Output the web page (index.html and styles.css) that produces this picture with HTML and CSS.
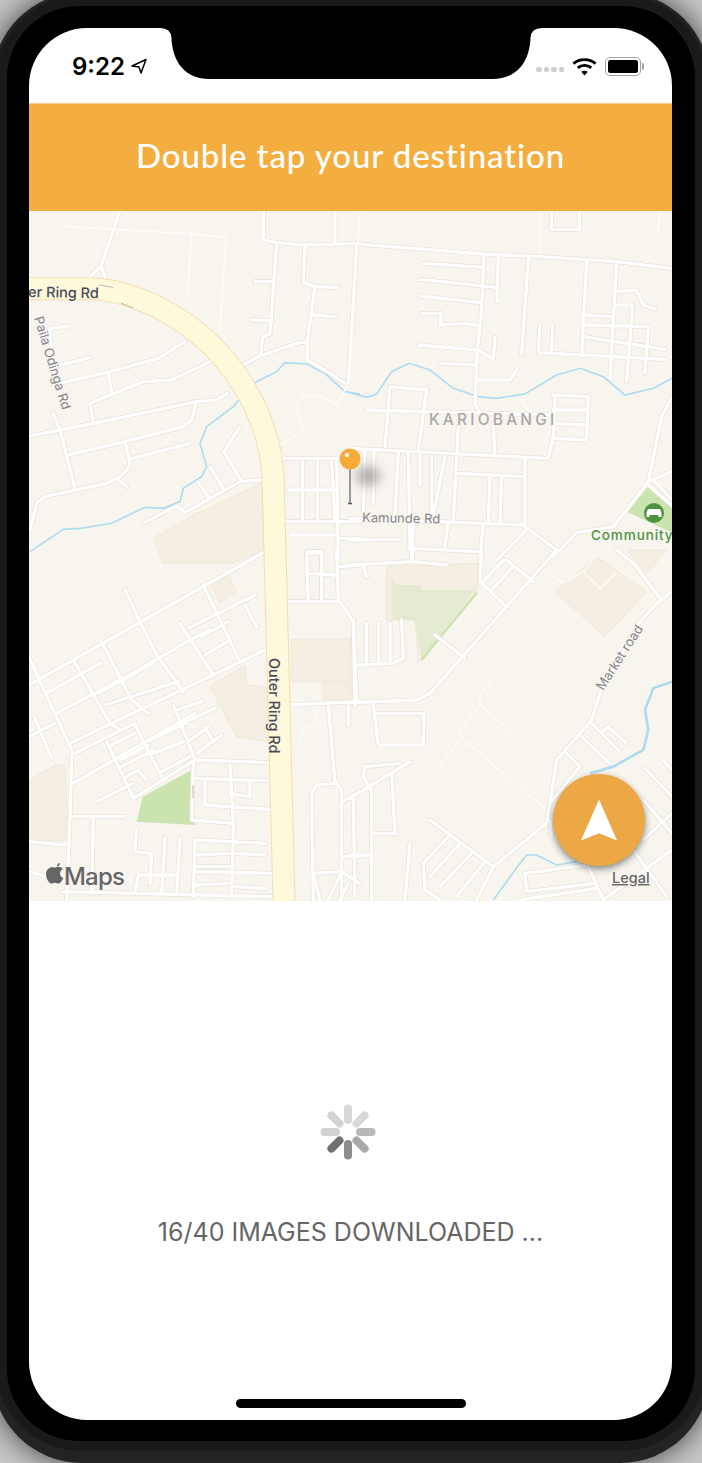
FILE: index.html
```html
<!DOCTYPE html>
<html lang="en">
<head>
    <meta charset="UTF-8">
    <meta name="viewport" content="width=device-width, initial-scale=1.0">
    <title>Double tap your destination</title>
    <link rel="stylesheet" href="styles.css">
</head>
<body>
    <div class="device">
        <div class="rim">
            <div class="bezel">
                <div class="screen">
                    <div class="status-bar">
                        <div class="status-left">
                            <span class="time">9:22</span>
                            <svg class="location-icon" viewBox="0 0 18 16"><path d="M16 1.5 2 8l7 1 2 6z"/></svg>
                        </div>
                        <div class="status-right">
                            <div class="signal"><i></i><i></i><i></i><i></i></div>
                            <svg class="wifi-icon" viewBox="0 0 26 19">
                                <path d="M1.5 6.5C7.8.9 18.2.9 24.5 6.5"/>
                                <path d="M6 11c4-3.5 10-3.5 14 0"/>
                                <path class="wifi-dot" d="M13 18.8 9.6 15c2-1.5 4.800-1.500 6.800 0z"/>
                            </svg>
                            <div class="battery"><div class="battery-level"></div></div>
                            <div class="battery-nub"></div>
                        </div>
                    </div>

                    <header class="title-bar">
                        <h1>Double tap your destination</h1>
                    </header>

                    <div class="map">
                        <svg class="map-svg" viewBox="29 211 643 690">
                            <defs>
                                <g id="roads">
                                    <!-- top left -->
                                    <g transform="translate(20 210) scale(.3333)">
                                        <path d="M300 0 270 90 243 168 205 205M243 168 258 210 285 225"/>
                                        <path d="M730 0V90L770 98 855 105 1020 100M945 0V98M770 98 750 372 728 380 722 435"/>
                                        <path d="M705 215H760M695 330 755 332M855 105 850 218 885 230 955 232M885 230 862 395V450L930 490 975 520"/>
                                        <path d="M1010 110 985 520M875 315 948 320M660 470 720 438 830 400 862 395"/>
                                        <path d="M88 355 145 348M88 355 105 520M105 470 212 442M100 525 270 485 415 445 495 395M265 490 275 548"/>
                                        <path d="M210 580 370 515 455 510 570 455M210 580 220 640M30 678 220 640 530 575 590 570 622 550"/>
                                        <path d="M530 575 515 630 490 650 315 695 145 735M120 660 165 835M100 610 120 660"/>
                                        <path d="M315 695 330 760 325 775 295 805 260 820 75 860 50 880 30 960M295 810 320 830M335 745 510 700"/>
                                        <path d="M660 650 612 725 665 815M570 770 612 840M535 818 568 865M372 938 470 888 495 908 660 815 725 810"/>
                                        <path d="M775 710 790 745H960M848 755V930M893 755V930M935 755 945 930M790 935H1020M805 840H945"/>
                                        <path d="M810 975H950M950 745 955 1050M960 985H1020M860 1050V1025H905V1050"/>
                                    </g>
                                    <!-- top right -->
                                    <g transform="translate(350 210) scale(.3333)">
                                        <path d="M0 100 400 132 570 140 800 155 966 175M605 0V58H688V0"/>
                                        <path d="M220 160 400 172M210 208 440 232 442 275M445 140 442 232M210 258 390 278M215 310H272V345L345 340 390 348"/>
                                        <path d="M402 135 395 300 382 420 375 580 390 610M205 405 385 420 430 448 435 382M272 460 380 465M385 510H480L500 480M535 145 515 432"/>
                                        <path d="M570 345 565 428 695 435 945 448M608 348 605 428M710 155 695 435M800 160 780 505M695 315 790 320"/>
                                        <path d="M800 245 860 240 880 285 915 297M800 285H848L830 515M700 345 895 350 885 490M700 380 945 418"/>
                                        <path d="M120 530 230 540 205 720M120 530 105 710M50 600 610 615"/>
                                        <path d="M610 555 715 560 710 690 608 685 595 745M615 565 610 680M610 600H710M610 640 710 645"/>
                                        <path d="M0 715 590 745M325 650 320 740M430 640 435 740M525 750V950M320 790 520 800M320 740 310 930"/>
                                        <path d="M145 725 135 915M175 730 180 1020M210 735V825M245 740V915M285 740 265 840 250 915M72 720 70 880M45 720 40 920"/>
                                        <path d="M420 800 415 935M455 800 450 935M0 925 520 945 620 1020M0 990 148 988M400 940 390 1040M295 935 285 1010"/>
                                        <path d="M190 1015 385 1025M190 940 185 1050M535 955 440 1050"/>
                                        <path d="M966 560 935 620 895 815 830 900 790 950 680 968 610 1040M895 815 966 785M895 825 970 890M910 810 966 870"/>
                                    </g>
                                    <!-- bottom left -->
                                    <g transform="translate(20 550) scale(.3333)">
                                        <path d="M27 405 735 5M315 118 355 205 410 315 490 425M245 275 335 450 385 490M160 330 270 520 300 540M27 320 60 395 160 610"/>
                                        <path d="M80 430 240 340M110 490 310 385 510 270 570 240M505 235 705 135M480 220 580 375M550 105 660 335M675 165 710 232"/>
                                        <path d="M150 580 735 300M545 260 625 215M555 315 630 270M235 430 400 340M255 465 475 395M165 610 345 520M160 700 525 490"/>
                                        <path d="M460 465 525 630M345 525 425 680M260 575 310 680 340 745 525 630M470 480 545 455M490 520 585 475M505 575 565 530"/>
                                        <path d="M530 610 605 555M555 530 575 565M275 585 345 550M300 630 385 585M390 570 500 520M400 610 490 575M425 665 510 620"/>
                                        <path d="M305 650 400 600M320 680 355 660 378 690M230 755 340 700M45 505 95 625M27 560 105 520"/>
                                        <path d="M155 615 150 800 140 1050M150 800H310M220 800 215 1030M27 875 135 885M30 965 130 995M130 1025 760 1040"/>
                                        <path d="M525 630 750 638M520 640 515 810 640 820M525 685 750 692M555 690V765L750 778M630 645 640 820 635 1040M690 695V740L630 730"/>
                                        <path d="M350 835 345 905 395 910 390 1000M435 865 425 1030M480 865 470 1030M345 1030 355 975H470"/>
                                        <path d="M525 870 735 880M640 910 735 915M525 915 630 910M525 950H630M525 870 520 1040M525 965 755 970M525 1005 630 1000M640 1010 735 1015"/>
                                        <path d="M800 155H960L1000 215 1005 465M810 465 1020 455M925 465 945 695 965 720V1050M945 700 890 705 875 730 880 1050"/>
                                        <path d="M965 755 1020 725M880 970 965 965 1020 1000M1000 750 1005 1040M970 920H1020M880 970 900 1050M965 965 925 1050M985 1000 960 1050"/>
                                        <path d="M860 10 865 150M905 10V150M950 0 955 150M860 70 950 75M865 10H895M960 50 1020 45M985 465V525"/>
                                    </g>
                                    <!-- bottom right -->
                                    <g transform="translate(350 550) scale(.3333)">
                                        <path d="M0 45 185 35 190 0M190 35 290 45M40 50 50 80M395 0 390 95 470 170M460 30 400 95M470 30 550 95M490 50 425 120"/>
                                        <path d="M620 0 240 430 200 450 0 458M800 0 850 40 935 150 966 125M930 150 870 215 750 430 725 510 620 630 600 760 590 820 430 950 240 810"/>
                                        <path d="M255 255 345 325M50 220V340M85 220V335M120 220V335M155 210 160 325 130 340 20 345M10 210 20 450"/>
                                        <path d="M70 465 85 585H220L222 490H75M180 635 0 745M45 650 40 680 65 725V1050M45 650 150 640M125 670 135 850M65 850H135M0 915H65"/>
                                        <path d="M180 880 165 1050M430 950 380 1050M300 855 220 940 225 1020 270 1050M330 880 240 980M370 905 270 1010M405 935 320 1040"/>
                                        <path d="M725 520 810 605M695 560 778 640M828 578 775 530 755 545M650 610 690 650 600 760M600 810 605 860"/>
                                        <path d="M885 655 966 740M940 630 966 660M880 750 966 850M966 790 880 870M850 900 950 1040M966 900 760 1050"/>
                                        <path d="M710 945 525 970 530 1025 730 1000M510 1050 740 1015M715 950 760 1050"/>
                                    </g>
                                </g>
                            </defs>

                            <rect class="land" x="29" y="211" width="643" height="690"/>

                            <g class="area">
                                <path transform="translate(20 210) scale(.3333)" d="M400 985 510 920 725 820 730 1020 640 1060H430Z"/>
                                <g transform="translate(20 550) scale(.3333)">
                                    <path d="M575 100 625 75 650 125 600 160Z"/>
                                    <path d="M570 410 650 560 745 575 740 410 680 405 675 345Z"/>
                                    <path d="M27 690 110 645 135 650 145 870 27 875Z"/>
                                    <path d="M815 268H1005V395H815ZM910 400H1005V450H910Z"/>
                                </g>
                                <g transform="translate(350 550) scale(.3333)">
                                    <path d="M110 50 385 40 380 125 215 330 205 335 195 210H110Z"/>
                                    <path d="M615 125 740 20 890 125 765 260Z"/>
                                    <path d="M830 0H950L890 70Z"/>
                                    <path d="M0 260H10V450H0Z"/>
                                </g>
                            </g>
                            <g class="park">
                                <path transform="translate(20 550) scale(.3333)" d="M368 740 515 660 525 825 350 815Z"/>
                                <path transform="translate(350 210) scale(.3333)" d="M900 825 970 900V970L830 905Z"/>
                                <path class="park-soft" transform="translate(350 550) scale(.3333)" d="M125 90 140 105H210L215 120H375L215 330 195 210H125Z"/>
                                <path class="park-edge" transform="translate(350 550) scale(.3333)" d="M380 128 215 330"/>
                            </g>

                            <g class="river">
                                <path transform="translate(20 210) scale(.3333)" d="M30 1025 130 958 180 955 275 940 375 892 430 895 480 875 490 835 545 800 560 770 540 700 560 650 640 590 700 520 770 485 795 458 860 462 915 490 975 545 1020 552"/>
                                <path transform="translate(350 210) scale(.3333)" d="M0 548 50 562 80 552 125 485 178 460 240 480 310 535 385 560 440 565 525 552 620 495 690 475 760 500 825 555 910 535 966 505"/>
                                <path transform="translate(350 550) scale(.3333)" d="M430 1050 510 940 530 915H560L620 945 680 935"/>
                                <path class="river-wide" transform="translate(350 550) scale(.3333)" d="M720 670 790 650 880 600 895 540 885 480 910 415 966 395"/>
                            </g>

                            <use class="road-casing" href="#roads"/>
                            <use class="road-fill" href="#roads"/>

                            <g class="path-thin">
                                <g transform="translate(20 210) scale(.3333)">
                                    <path d="M120 48 515 72 618 82 600 360 618 390M515 72 502 258"/>
                                    <path d="M1010 110 985 520 950 585 905 560 850 555 825 590 850 660 775 710"/>
                                </g>
                                <g transform="translate(350 210) scale(.3333)">
                                    <path d="M30 0 22 105 0 520M570 0V140M930 0 925 62M515 565 525 590 545 605"/>
                                </g>
                                <g transform="translate(350 550) scale(.3333)">
                                    <path d="M590 60 640 100 700 65 745 10M700 65 750 115 800 70"/>
                                    <path d="M435 380 390 435V465L330 540 335 565 590 780M390 465 500 560M335 565 255 665"/>
                                </g>
                                <g transform="translate(20 550) scale(.3333)">
                                    <path d="M895 470 885 520 850 540 840 570M835 455 860 425"/>
                                </g>
                            </g>

                            <path class="ring-casing" d="M29 288.700H90C135 290 190 318 225 360 250 390 270 430 273 475L284 901"/>
                            <path class="ring-fill" d="M29 288.700H90C135 290 190 318 225 360 250 390 270 430 273 475L284 901"/>
                            <path class="one-way" d="M99 285 113 287.500M121 303 133 308M193 785V798"/>

                            <text class="label label-ring" transform="translate(28 297) rotate(1)">er Ring Rd</text>
                            <text class="label label-ring" transform="translate(269 658) rotate(90)">Outer Ring Rd</text>
                            <text class="label label-minor" transform="translate(34 318) rotate(73)">Paila Odinga Rd</text>
                            <text class="label label-minor" transform="translate(362 522) rotate(1)">Kamunde Rd</text>
                            <text class="label label-minor" transform="translate(603 691) rotate(-57)">Market road</text>
                            <text class="label label-place" x="429" y="425">KARIOBANGI</text>
                            <text class="label label-poi" x="591" y="540">Community</text>

                            <circle class="poi-dot" cx="654" cy="513" r="10"/>
                            <path class="poi-glyph" d="M648 509h12l1.500 4v4h-3v-2h-9v2h-3v-4z"/>

                            <path class="apple-logo" d="M57 866.500c1.300-.1 2.700-1 3-3.500-1.800.2-3.200 1.500-3 3.500zm-5.200 1c-3 0-5.800 2.500-5.800 6.500 0 4.500 3 9.500 5.500 9.500 1.200 0 2-.8 3.500-.8s2.200.8 3.500.8c1.800 0 3.800-2.800 4.700-5.500-2-.8-3.200-2.500-3.200-4.500s1.100-3.500 2.800-4.500c-1.200-1.500-2.800-2.300-4.500-2.300-1.500 0-2.500.8-3.600.8-1.200 0-2-.8-3.400-.8z"/>
                            <text class="label label-maps" x="64" y="885">Maps</text>
                            <text class="label label-legal" x="612" y="883">Legal</text>

                            <!-- pin -->
                            <ellipse class="pin-shadow" cx="368" cy="476" rx="12" ry="10"/>
                            <path class="pin-stem" d="M350 468V503"/>
                            <path class="pin-foot" d="M348 503.500H352"/>
                            <circle class="pin-head" cx="350" cy="459" r="10.500"/>
                            <circle class="pin-shine" cx="347" cy="455" r="2.200"/>
                        </svg>

                        <button class="locate-btn" type="button" aria-label="Locate">
                            <svg viewBox="0 0 40 44"><path d="M20 0 39 43 20 35.500 1 43z"/></svg>
                        </button>
                    </div>

                    <div class="loading">
                        <svg class="spinner" viewBox="-28 -28 56 56">
                            <path class="spoke s1" d="M0-23.500V-12"/>
                            <path class="spoke s2" d="M16.600-16.600 8.500-8.500"/>
                            <path class="spoke s3" d="M23.500 0H12"/>
                            <path class="spoke s4" d="M16.600 16.600 8.500 8.500"/>
                            <path class="spoke s5" d="M0 23.500V12"/>
                            <path class="spoke s6" d="M-16.600 16.600-8.500 8.500"/>
                            <path class="spoke s7" d="M-23.500 0H-12"/>
                            <path class="spoke s8" d="M-16.600-16.600-8.500-8.500"/>
                        </svg>
                        <p class="loading-text">16/40 IMAGES DOWNLOADED ...</p>
                    </div>

                    <div class="home-indicator"></div>
                </div>
                <svg class="notch" viewBox="160 28 382 52"><path d="M160 28Q171 28 171.500 38C172 55 180 79 210 79H492C522 79 530 55 530.500 38Q531 28 542 28Z"/></svg>
            </div>
        </div>
    </div>
</body>
</html>
```
FILE: styles.css
```css
* {
    box-sizing: border-box;
}
html, body {
    margin: 0;
    padding: 0;
    height: 100%;
    overflow: hidden;
}
body {
    background-color: #c8c8c8;
    font-family: Inter, Roboto, sans-serif;
}

/* phone frame, a bit wider than the window so its sides get cut off */
.device {
    width: 718px;
    height: 1471px;
    margin: -8px -8px 0;
    padding: 3px 3px 12px;
    background-color: #232323;
    border-radius: 90px;
    box-shadow: 0 0 30px #3c3c3c;
}
.rim {
    height: 1456px;
    padding: 11px 12px 10px;
    background-color: #1a1a1a;
    border-radius: 87px;
}
.bezel {
    position: relative;
    height: 1435px;
    padding: 22px 23px 21px 22px;
    background-color: #000;
    border-radius: 72px;
}
.screen {
    position: relative;
    display: flex;
    flex-direction: column;
    height: 1392px;
    background-color: #fff;
    border-radius: 58px;
    overflow: hidden;
}
.notch {
    position: absolute;
    top: 22px;
    left: 153px;
    width: 382px;
    height: 52px;
    fill: #000;
}

/* status bar */
.status-bar {
    display: flex;
    justify-content: space-between;
    flex: 0 0 75px;
    padding: 22px 28px 0 43px;
}
.status-left, .status-right {
    display: flex;
    align-items: center;
    height: 32px;
}
.time {
    font-size: 24px;
    font-weight: 600;
    color: #000;
}
.location-icon {
    width: 18px;
    height: 16px;
    margin-left: 5px;
    fill: none;
    stroke: #000;
    stroke-width: 1.500;
    stroke-linejoin: round;
}
.signal {
    display: flex;
    gap: 2px;
    margin-right: 8px;
    margin-top: 7px;
}
.signal i {
    width: 5.500px;
    height: 5.500px;
    background-color: #cfcfcf;
    border-radius: 2px;
}
.wifi-icon {
    width: 25px;
    height: 19px;
    margin-right: 8px;
    fill: none;
    stroke: #000;
    stroke-width: 3;
}
.wifi-dot {
    fill: #000;
    stroke: none;
}
.battery {
    width: 36px;
    height: 19px;
    padding: 2px;
    border: 1.500px solid #a0a0a0;
    border-radius: 5px;
}
.battery-level {
    height: 100%;
    background-color: #000;
    border-radius: 2.500px;
}
.battery-nub {
    width: 2px;
    height: 7px;
    margin-left: 1px;
    background-color: #a0a0a0;
    border-radius: 0 2px 2px 0;
}

/* title */
.title-bar {
    display: flex;
    align-items: center;
    justify-content: center;
    flex: 0 0 108px;
    padding-bottom: 6px;
    background-color: #f4ae40;
    border-top: 1px solid #f8cd88;
}
.title-bar h1 {
    margin: 0;
    font-family: Lato, sans-serif;
    font-size: 33px;
    font-weight: 500;
    letter-spacing: .9px;
    color: #fff;
}

/* map */
.map {
    position: relative;
    flex: 0 0 690px;
}
.map-svg {
    display: block;
    width: 643px;
    height: 690px;
}
.land {
    fill: #f8f5ef;
}
.area path {
    fill: #f5eee2;
    stroke: #efe8da;
    stroke-width: 3;
}
.park path {
    fill: #cbe3ae;
}
.park .park-soft {
    fill: #e3ead0;
}
.park .park-edge {
    fill: none;
    stroke: #cbe3ae;
    stroke-width: 7;
}
.river {
    fill: none;
    stroke: #addcef;
    stroke-width: 5;
}
.river .river-wide {
    stroke-width: 8;
}
#roads {
    fill: none;
    stroke-linecap: round;
    stroke-linejoin: round;
}
.road-casing {
    stroke: #e6e1d8;
    stroke-width: 14;
}
.road-fill {
    stroke: #fff;
    stroke-width: 10;
}
.path-thin {
    fill: none;
    stroke: #fdfcf9;
    stroke-width: 4;
}
.ring-casing, .ring-fill {
    fill: none;
    stroke-linejoin: round;
}
.ring-casing {
    stroke: #f7dcb0;
    stroke-width: 23;
}
.ring-fill {
    stroke: #fef9da;
    stroke-width: 21;
}
.one-way {
    fill: none;
    stroke: #b9b9b2;
    stroke-width: 1;
}
.label {
    font-family: Inter, Roboto, sans-serif;
    paint-order: stroke;
    stroke: #f8f5ef;
    stroke-width: 1px;
}
.label-ring {
    font-size: 14.500px;
    font-weight: 500;
    fill: #4d4d4f;
}
.label-minor {
    font-size: 13px;
    fill: #85858a;
}
.label-place {
    font-size: 15.500px;
    font-weight: 500;
    letter-spacing: 3.200px;
    fill: #a9a8a6;
}
.label-poi {
    font-size: 13.500px;
    font-weight: 500;
    letter-spacing: .9px;
    fill: #4d9440;
}
.label-maps {
    font-size: 24px;
    font-weight: 500;
    fill: #666;
    stroke: none;
    letter-spacing: -.8px;
}
.label-legal {
    font-size: 14.500px;
    font-weight: 500;
    fill: #666;
    text-decoration: underline;
}
.poi-dot {
    fill: #4d9440;
}
.poi-glyph {
    fill: #fff;
}
.apple-logo {
    fill: #666;
}
.pin-shadow {
    fill: #666;
    opacity: .5;
    filter: blur(6px);
}
.pin-stem {
    stroke: #96999e;
    stroke-width: 2;
}
.pin-foot {
    stroke: #555;
    stroke-width: 1.500;
}
.pin-head {
    fill: #f5ab35;
}
.pin-shine {
    fill: #fff;
    opacity: .9;
}
.locate-btn {
    position: absolute;
    left: 524px;
    top: 563px;
    display: flex;
    align-items: center;
    justify-content: center;
    width: 92px;
    height: 92px;
    padding: 0;
    background-color: #eba844;
    border: none;
    border-radius: 50%;
    box-shadow: 0 3px 7px rgba(0, 0, 0, 0.45);
}
.locate-btn svg {
    width: 38px;
    height: 43px;
    margin-top: 1px;
    fill: #fff;
}

/* download progress */
.loading {
    display: flex;
    flex-direction: column;
    align-items: center;
    flex: 1;
    padding-top: 203px;
}
.spinner {
    width: 56px;
    height: 56px;
    margin-right: 6px;
    fill: none;
    stroke-width: 8;
    stroke-linecap: round;
}
.spoke.s1 { stroke: #d8d8d8; }
.spoke.s2 { stroke: #d8d8d8; }
.spoke.s3 { stroke: #b8b8b8; }
.spoke.s4 { stroke: #a8a8a8; }
.spoke.s5 { stroke: #8c8c8c; }
.spoke.s6 { stroke: #717171; }
.spoke.s7 { stroke: #d2d2d2; }
.spoke.s8 { stroke: #d2d2d2; }
.loading-text {
    margin: 57px 0 0;
    font-size: 25px;
    color: #666;
}
.home-indicator {
    position: absolute;
    left: 207px;
    bottom: 12px;
    width: 230px;
    height: 9px;
    background-color: #000;
    border-radius: 5px;
}
```
